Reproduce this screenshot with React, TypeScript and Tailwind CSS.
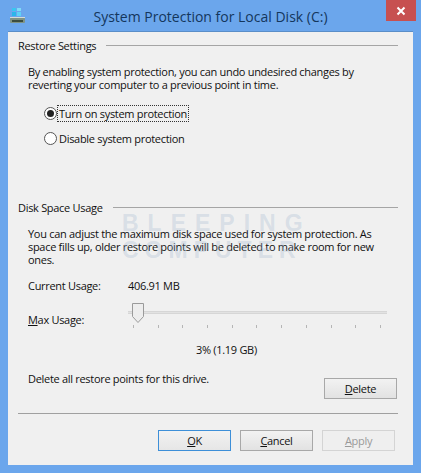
function Section({ title }: { title: string }) {
  return (
    <div className="flex items-center gap-[10px] h-[13px] pr-[15px]">
      <span className="text-[#111]">{title}</span>
      <div className="flex-1 h-px bg-[#a5a5a5]" />
    </div>
  );
}
function Radio({ checked, label, focus }: { checked?: boolean; label: string; focus?: boolean }) {
  return (
    <div className="flex items-center h-[15px] ml-[26px] gap-[1px]">
      <span className="w-[13px] h-[13px] rounded-full border border-[#555] bg-white flex items-center justify-center shrink-0">
        {checked && <span className="w-[7px] h-[7px] rounded-full bg-[#222]" />}
      </span>
      <span className={focus ? "outline-1 outline-dotted outline-[#333] leading-[15px] px-px" : "leading-[15px] px-px"}>{label}</span>
    </div>
  );
}
function Btn({ children, primary, disabled }: { children: React.ReactNode; primary?: boolean; disabled?: boolean }) {
  const cls = primary
    ? "border-[#3d8fd8] bg-gradient-to-b from-[#f2f2f2] to-[#e6e6e6] text-[#111]"
    : disabled
    ? "border-[#d4d4d4] bg-[#efefef] text-[#9a9a9a]"
    : "border-[#a8a8a8] bg-gradient-to-b from-[#f2f2f2] to-[#e2e2e2] text-[#111]";
  return <div className={"w-[73px] h-[21px] border flex items-center justify-center " + cls}>{children}</div>;
}
export default function App() {
  const ticks = Array.from({ length: 11 });
  return (
    <div className="relative w-[421px] h-[473px] bg-[#6ba6ec] flex flex-col overflow-hidden text-[11px] tracking-[-0.3px] leading-[13px] text-[#111] font-['Open_Sans',sans-serif]">
      <div className="relative h-[31px] shrink-0 flex items-center justify-center">
        <span className="text-[14px] tracking-normal text-[#14365c] pt-[1px]">System Protection for Local Disk (C:)</span>
        <svg className="absolute left-[9px] top-[7px]" width="18" height="17" viewBox="0 0 18 17">
          <rect x="3" y="1" width="4" height="3" fill="#38c6f0" />
          <rect x="8" y="1" width="4" height="3" fill="#7fdcf8" />
          <rect x="3" y="5" width="4" height="4" fill="#2bb6ea" />
          <rect x="8" y="5" width="4" height="4" fill="#5fd2f6" />
          <rect x="1" y="11" width="15" height="5" rx="1" fill="#7f9384" />
          <rect x="3" y="13" width="11" height="2" fill="#3b4d40" />
          <rect x="1" y="10" width="15" height="1" fill="#d5dcd6" />
        </svg>
        <div className="absolute right-[5px] top-0 w-[30px] h-[21px] bg-[#c75050] flex items-center justify-center">
          <svg width="10" height="10" viewBox="0 0 10 10"><path d="M1.5 1.5 8.5 8.5M8.5 1.5 1.5 8.5" stroke="#fff" strokeWidth="2" /></svg>
        </div>
      </div>
      <div className="relative mx-2 h-[434px] bg-[#f0f0f0] border-t border-[#5a8ec8] flex flex-col pl-[10px] pt-[7px]">
        <Section title="Restore Settings" />
        <div className="ml-[10px] mt-[13px] mb-[15px]">
          <p>By enabling system protection, you can undo undesired changes by</p>
          <p>reverting your computer to a previous point in time.</p>
        </div>
        <Radio checked focus label="Turn on system protection" />
        <div className="mt-[10px]"><Radio label="Disable system protection" /></div>
        <div className="mt-[55px]"><Section title="Disk Space Usage" /></div>
        <div className="ml-[10px] mt-[13px]">
          <p>You can adjust the maximum disk space used for system protection. As</p>
          <p>space fills up, older restore points will be deleted to make room for new</p>
          <p>ones.</p>
          <div className="flex mt-[13px]">
            <span className="w-[100px]">Current Usage:</span>
            <span>406.91 MB</span>
          </div>
          <div className="flex mt-[13px] h-[32px]">
            <span className="w-[100px] mt-[8px]"><u>M</u>ax Usage:</span>
            <div className="relative w-[259px] h-[32px]">
              <div className="absolute left-0 right-0 top-[6px] h-[3px] bg-[#e2e2e2] border-y border-[#d6d6d6]" />
              <svg className="absolute left-[4px] top-[-2px]" width="12" height="20" viewBox="0 0 12 20">
                <path d="M.5.5h11v13L6 19.5.5 13.5z" fill="#ededed" stroke="#9a9a9a" />
              </svg>
              <div className="absolute left-[5px] w-[248px] top-[20px] flex justify-between">
                {ticks.map((_, i) => <span key={i} className="w-px h-[3px] bg-[#b5b5b5]" />)}
              </div>
            </div>
          </div>
          <p className="mt-[6px] pl-[168px]">3% (1.19 GB)</p>
          <div className="flex items-start justify-between mt-[16px] pr-[16px]">
            <span>Delete all restore points for this drive.</span>
            <div className="mt-[6px]"><Btn><span><u>D</u>elete</span></Btn></div>
          </div>
        </div>
        <div className="mt-[14px] h-px bg-[#a0a0a0] mr-[15px]" />
        <div className="flex justify-end gap-[9px] mt-[16px] pr-[17px] mr-px">
          <Btn primary><span><u>O</u>K</span></Btn>
          <Btn><span><u>C</u>ancel</span></Btn>
          <Btn disabled><span><u>A</u>pply</span></Btn>
        </div>
        <div className="absolute left-[114px] top-[178px] w-[178px] text-[#9fb4cf]/30 font-['Liberation_Sans',sans-serif] font-bold text-[23px] leading-[27px] pointer-events-none">
          <div className="tracking-[9px]">BLEEPING</div>
          <div className="tracking-[6px]">COMPUTER</div>
        </div>
      </div>
    </div>
  );
}
